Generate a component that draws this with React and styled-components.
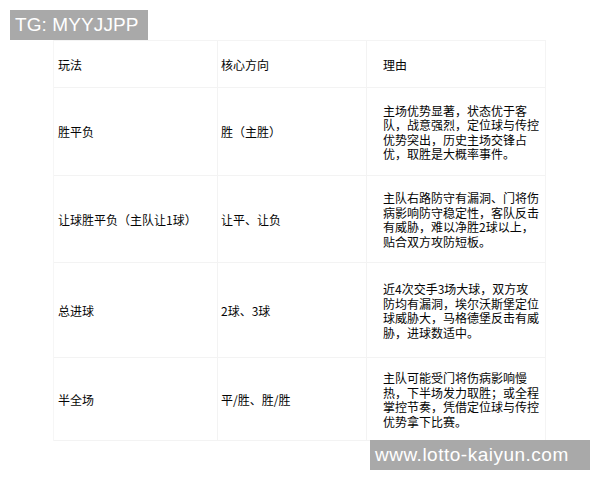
import React from "react";
import styled, { createGlobalStyle } from "styled-components";

const GlobalStyle = createGlobalStyle`
    html, body {
        margin: 0;
        padding: 0;
        background: #ffffff;
    }
    body {
        font-family: "Noto Sans CJK SC", "Liberation Sans", sans-serif;
        color: #222;
    }
`;

const rows = [
    { h: 88, play: "胜平负", dir: "胜（主胜）", reason: "主场优势显著，状态优于客队，战意强烈，定位球与传控优势突出，历史主场交锋占优，取胜是大概率事件。" },
    { h: 87, play: "让球胜平负（主队让1球）", dir: "让平、让负", reason: "主队右路防守有漏洞、门将伤病影响防守稳定性，客队反击有威胁，难以净胜2球以上，贴合双方攻防短板。" },
    { h: 95, play: "总进球", dir: "2球、3球", reason: "近4次交手3场大球，双方攻防均有漏洞，埃尔沃斯堡定位球威胁大，马格德堡反击有威胁，进球数适中。" },
    { h: 83, play: "半全场", dir: "平/胜、胜/胜", reason: "主队可能受门将伤病影响慢热，下半场发力取胜；或全程掌控节奏，凭借定位球与传控优势拿下比赛。" },
];

export default function App() {
    return (
        <Page>
            <GlobalStyle />
            <Table>
                <Row $h={47}>
                    <Cell $pad={4}>玩法</Cell>
                    <Cell $pad={3}>核心方向</Cell>
                    <Cell $pad={16} $last>理由</Cell>
                </Row>
                {rows.map((r, idx) => (
                    <Row key={idx} $h={r.h}>
                        <Cell $pad={4}>{r.play}</Cell>
                        <Cell $pad={3}>{r.dir}</Cell>
                        <Cell $pad={16} $last>
                            <Reason>{r.reason}</Reason>
                        </Cell>
                    </Row>
                ))}
            </Table>
            <Mark $top={10} $left={10} $w={138} $ls={0.1}>TG: MYYJJPP</Mark>
            <Mark $top={440} $left={370} $w={220} $ls={0.5}>www.lotto-kaiyun.com</Mark>
        </Page>
    );
}

const Page = styled.div`
    position: relative;
    width: 600px;
    height: 480px;
    overflow: hidden;
    padding: 40px 0 0 53px;
    box-sizing: border-box;
`;

const Table = styled.div`
    width: 491px;
    border-top: 1px solid #f4f4f4;
    border-left: 1px solid #f6f6f6;
    border-right: 1px solid #f4f4f4;
`;

const Row = styled.div`
    display: grid;
    grid-template-columns: 164px 149px 1fr;
    height: ${p => p.$h}px;
    border-bottom: 1px solid #f3f3f3;
    box-sizing: border-box;
`;

const Cell = styled.div`
    display: flex;
    align-items: center;
    padding-left: ${p => p.$pad}px;
    padding-top: 2px;
    font-size: 12px;
    line-height: 14.5px;
    color: #050505;
    border-right: ${p => (p.$last ? "none" : "1px solid #f3f3f3")};
    white-space: nowrap;
`;

const Reason = styled.div`
    width: 156px;
    white-space: normal;
    word-break: break-all;
`;

const Mark = styled.div`
    position: absolute;
    top: ${p => p.$top}px;
    left: ${p => p.$left}px;
    width: ${p => p.$w}px;
    height: 30px;
    box-sizing: border-box;
    padding-left: 5px;
    background: #a9a9a9;
    color: #ffffff;
    font-family: "Liberation Sans", Arial, sans-serif;
    font-size: 19px;
    line-height: 30px;
    letter-spacing: ${p => p.$ls}px;
`;
